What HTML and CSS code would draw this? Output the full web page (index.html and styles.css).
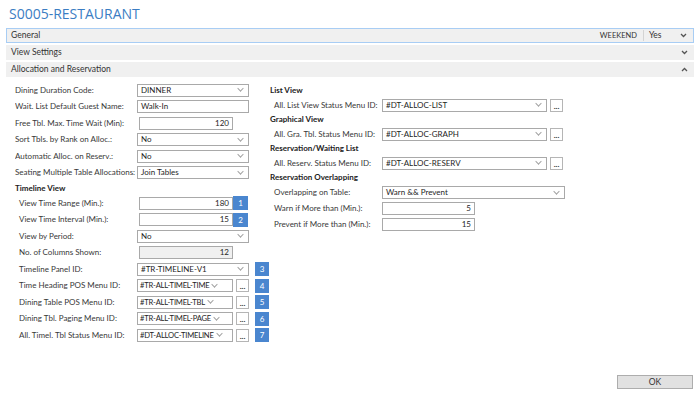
FILE: index.html
```html
<!DOCTYPE html>
<html lang="en">
<head>
<meta charset="UTF-8">
<meta name="viewport" content="width=device-width, initial-scale=1.0">
<title>S0005-RESTAURANT</title>
<link rel="stylesheet" href="styles.css">
</head>
<body>
<h1 class="title">S0005-RESTAURANT</h1>

<div class="bar bar-active">
    <span class="bar-name">General</span>
    <span class="bar-info">WEEKEND</span>
    <span class="bar-sep"></span>
    <span class="bar-info bar-yes">Yes</span>
    <svg class="chev" width="7" height="5" viewBox="0 0 7 5"><polyline points="1,1 3.5,3.5 6,1" fill="none" stroke="#555" stroke-width="1.3"/></svg>
</div>
<div class="bar">
    <span class="bar-name">View Settings</span>
    <svg class="chev" width="7" height="5" viewBox="0 0 7 5"><polyline points="1,1 3.5,3.5 6,1" fill="none" stroke="#555" stroke-width="1.3"/></svg>
</div>
<div class="bar">
    <span class="bar-name">Allocation and Reservation</span>
    <svg class="chev" width="7" height="5" viewBox="0 0 7 5"><polyline points="1,4 3.5,1.5 6,4" fill="none" stroke="#555" stroke-width="1.3"/></svg>
</div>

<div class="section">
    <div class="col-left">
        <div class="row"><label>Dining Duration Code:</label><div class="field sel">DINNER<span class="arrow"></span></div></div>
        <div class="row"><label>Wait. List Default Guest Name:</label><div class="field sel">Walk-In</div></div>
        <div class="row"><label>Free Tbl. Max. Time Wait (Min):</label><div class="field num">120</div></div>
        <div class="row"><label>Sort Tbls. by Rank on Alloc.:</label><div class="field sel">No<span class="arrow"></span></div></div>
        <div class="row"><label>Automatic Alloc. on Reserv.:</label><div class="field sel">No<span class="arrow"></span></div></div>
        <div class="row"><label>Seating Multiple Table Allocations:</label><div class="field sel">Join Tables<span class="arrow"></span></div></div>

        <div class="group-title">Timeline View</div>
        <div class="row sub"><label>View Time Range (Min.):</label><div class="field num">180</div><span class="badge">1</span></div>
        <div class="row sub"><label>View Time Interval (Min.):</label><div class="field num">15</div><span class="badge">2</span></div>
        <div class="row sub"><label>View by Period:</label><div class="field sel">No<span class="arrow"></span></div></div>
        <div class="row sub"><label>No. of Columns Shown:</label><div class="field num disabled">12</div></div>
        <div class="row sub"><label>Timeline Panel ID:</label><div class="field sel">#TR-TIMELINE-V1<span class="arrow"></span></div><span class="badge gap">3</span></div>
        <div class="row sub"><label>Time Heading POS Menu ID:</label><div class="field sel-short">#TR-ALL-TIMEL-TIME<span class="arrow"></span></div><span class="dots">...</span><span class="badge gap">4</span></div>
        <div class="row sub"><label>Dining Table POS Menu ID:</label><div class="field sel-short">#TR-ALL-TIMEL-TBL<span class="arrow"></span></div><span class="dots">...</span><span class="badge gap">5</span></div>
        <div class="row sub"><label>Dining Tbl. Paging Menu ID:</label><div class="field sel-short">#TR-ALL-TIMEL-PAGE<span class="arrow"></span></div><span class="dots">...</span><span class="badge gap">6</span></div>
        <div class="row sub"><label>All. Timel. Tbl Status Menu ID:</label><div class="field sel-short">#DT-ALLOC-TIMELINE<span class="arrow"></span></div><span class="dots">...</span><span class="badge gap">7</span></div>
    </div>

    <div class="col-right">
        <div class="group-title">List View</div>
        <div class="row rrow"><label>All. List View Status Menu ID:</label><div class="field sel-wide">#DT-ALLOC-LIST<span class="arrow"></span></div><span class="dots">...</span></div>
        <div class="group-title">Graphical View</div>
        <div class="row rrow"><label>All. Gra. Tbl. Status Menu ID:</label><div class="field sel-wide">#DT-ALLOC-GRAPH<span class="arrow"></span></div><span class="dots">...</span></div>
        <div class="group-title">Reservation/Waiting List</div>
        <div class="row rrow"><label>All. Reserv. Status Menu ID:</label><div class="field sel-wide">#DT-ALLOC-RESERV<span class="arrow"></span></div><span class="dots">...</span></div>
        <div class="group-title">Reservation Overlapping</div>
        <div class="row rrow tall"><label>Overlapping on Table:</label><div class="field sel-full">Warn &amp;&amp; Prevent<span class="arrow"></span></div></div>
        <div class="row rrow tall"><label>Warn if More than (Min.):</label><div class="field num-r">5</div></div>
        <div class="row rrow tall"><label>Prevent if More than (Min.):</label><div class="field num-r">15</div></div>
    </div>
</div>

<div class="footer">
    <button class="ok">OK</button>
</div>
</body>
</html>
```

FILE: styles.css
```css
body {
    margin: 0;
    height: 100vh;
    display: flex;
    flex-direction: column;
    font-family: Lato, "Noto Sans", sans-serif;
    font-size: 8px;
    line-height: 11px;
    color: #383838;
    background-color: #fff;
}

.title {
    margin: 4px 0 4px 9px;
    font-family: "Open Sans", "Noto Sans", sans-serif;
    font-size: 14px;
    line-height: 20px;
    font-weight: normal;
    color: #3b7dc3;
}

.bar {
    margin: 0 6px 2px;
    height: 15px;
    box-sizing: border-box;
    padding: 0 6px 0 5px;
    display: flex;
    align-items: center;
    background-color: #f0f0f0;
    font-size: 8.5px;
    color: #333;
}

.bar-active {
    border: 1px solid #a8cdf4;
    padding-left: 4px;
}

.bar-name {
    flex: 1;
}

.bar-info {
    font-size: 7.5px;
}

.bar-sep {
    width: 1px;
    height: 11px;
    margin: 0 5px 0 6px;
    background-color: #d4d4d4;
}

.bar-yes {
    width: 29px;
    font-size: 8.5px;
}

.chev {
    margin-left: 2px;
}

.section {
    display: grid;
    grid-template-columns: 255px 1fr;
    padding: 3px 0 0 15px;
}

.row {
    display: flex;
    align-items: center;
    height: 16.5px;
}

.row label {
    width: 122px;
    flex-shrink: 0;
    white-space: nowrap;
    overflow: hidden;
}

.row.sub label {
    padding-left: 4px;
    box-sizing: border-box;
}

.group-title {
    height: 14px;
    line-height: 14px;
    font-weight: bold;
    color: #222;
}

.col-right {
    padding-top: 2px;
}

.col-right .group-title {
    height: 13.5px;
    line-height: 13.5px;
}

.field {
    height: 13px;
    box-sizing: border-box;
    border: 1px solid #a9a9a9;
    background-color: #fff;
    display: flex;
    align-items: center;
    padding: 0 3px;
    color: #1e1e1e;
    white-space: nowrap;
    overflow: hidden;
}

.sel {
    width: 112px;
}

.sel-short {
    width: 96px;
    padding: 0 2px;
    font-size: 7.6px;
    letter-spacing: -0.2px;
}

.num {
    width: 94px;
    margin-left: 2px;
    justify-content: flex-end;
}

.disabled {
    background-color: #f0f0f0;
}

.arrow {
    flex-shrink: 0;
    margin-left: auto;
    width: 4px;
    height: 4px;
    border-right: 1px solid #a0a0a0;
    border-bottom: 1px solid #a0a0a0;
    transform: rotate(45deg) scale(0.9);
    margin-top: -3px;
    margin-right: 2px;
}

.sel-short .arrow {
    margin-left: 3px;
}

.dots {
    width: 13px;
    height: 13px;
    box-sizing: border-box;
    margin-left: 3px;
    border: 1px solid #b5b5b5;
    background-color: #fff;
    font-size: 8px;
    line-height: 13px;
    text-align: center;
    font-weight: bold;
    color: #333;
}

.badge {
    width: 15px;
    height: 14px;
    background-color: #4a86cf;
    color: #fff;
    font-size: 8px;
    line-height: 14px;
    text-align: center;
}

.badge.gap {
    width: 14px;
    margin-left: 6px;
}

.col-right .row label {
    width: 112px;
    padding-left: 4px;
    box-sizing: border-box;
}

.rrow {
    height: 15.5px;
}

.rrow.tall {
    height: 16px;
}

.sel-wide {
    width: 165px;
}

.sel-full {
    width: 183px;
}

.num-r {
    width: 93px;
    justify-content: flex-end;
}

.footer {
    margin-top: auto;
    display: flex;
    justify-content: flex-end;
    padding: 0 7px 7px 0;
}

.ok {
    width: 76px;
    height: 14px;
    padding: 0;
    border: 1px solid #adadad;
    background-color: #e1e1e1;
    font-family: Lato, "Noto Sans", sans-serif;
    font-size: 8.5px;
    color: #333;
}
```
